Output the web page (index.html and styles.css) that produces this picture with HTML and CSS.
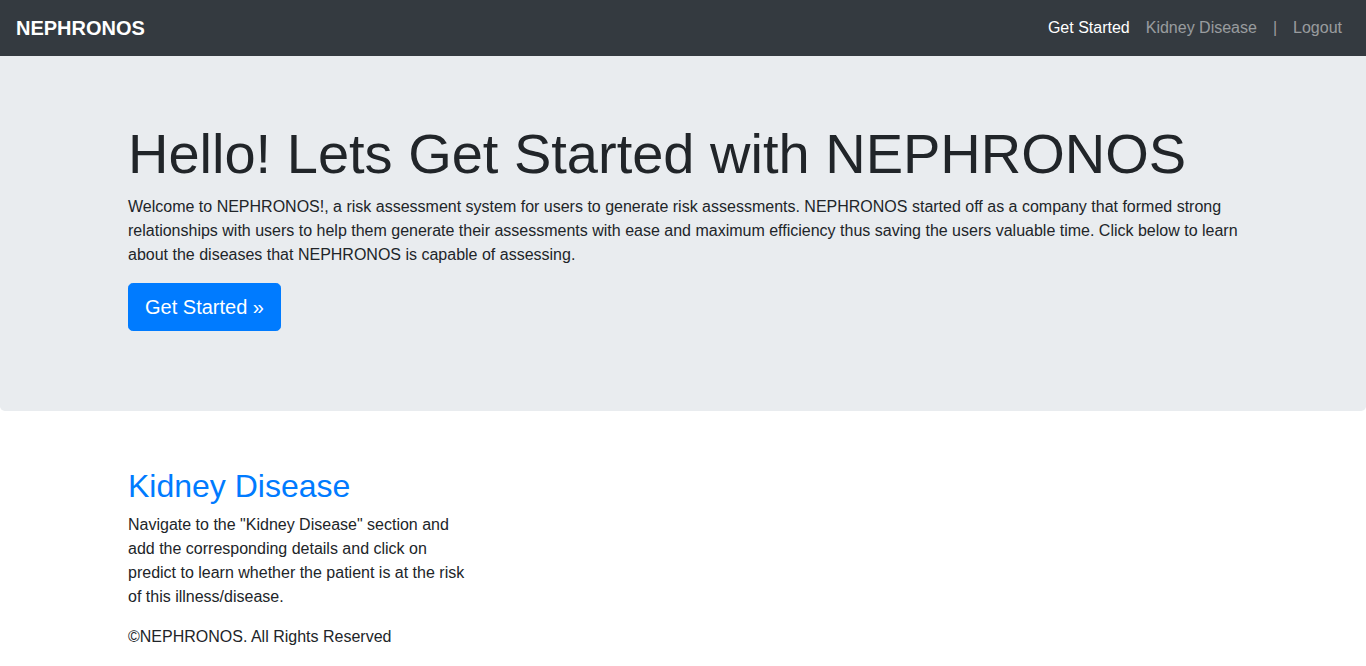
FILE: index.html
```html
<!DOCTYPE html>
<html lang="en">
<head>
<meta charset="utf-8">
<title>NEPHRONOS</title>
<link rel="stylesheet" href="styles.css">
</head>
<body>
<nav class="navbar">
  <a class="brand" href="#">NEPHRONOS</a>
  <ul class="nav">
    <li><a class="nav-link active" href="#">Get Started</a></li>
    <li><a class="nav-link" href="#">Kidney Disease</a></li>
    <li><span class="nav-link">|</span></li>
    <li><a class="nav-link" href="#">Logout</a></li>
  </ul>
</nav>
<main>
  <div class="jumbotron">
    <div class="container">
      <h1 class="display">Hello! Lets Get Started with NEPHRONOS</h1>
      <p>Welcome to NEPHRONOS!, a risk assessment system for users to generate risk assessments. NEPHRONOS started off as a company that formed strong relationships with users to help them generate their assessments with ease and maximum efficiency thus saving the users valuable time. Click below to learn about the diseases that NEPHRONOS is capable of assessing.</p>
      <p><a class="btn" href="#">Get Started &raquo;</a></p>
    </div>
  </div>
  <div class="container features">
    <div class="row">
      <div class="col">
        <h2><a href="#">Kidney Disease</a></h2>
        <p>Navigate to the "Kidney Disease" section and add the corresponding details and click on predict to learn whether the patient is at the risk of this illness/disease.</p>
      </div>
    </div>
  </div>
</main>
<footer class="container">
  <p>&copy;NEPHRONOS. All Rights Reserved</p>
</footer>
</body>
</html>
```
FILE: styles.css
```css
* { box-sizing: border-box; }
html, body { margin: 0; padding: 0; }
body {
  font-family: "Liberation Sans", Arial, sans-serif;
  font-size: 16px;
  line-height: 1.5;
  color: #212529;
  background: #fff;
}
a { text-decoration: none; }
p { margin: 0 0 16px 0; }

.navbar {
  background: #343a40;
  height: 56px;
  padding: 8px 16px;
  display: flex;
  align-items: center;
  justify-content: space-between;
}
.brand {
  color: #fff;
  font-weight: 700;
  font-size: 20px;
  line-height: 30px;
  padding: 5px 0;
}
.nav {
  list-style: none;
  margin: 0;
  padding: 0;
  display: flex;
}
.nav-link {
  display: block;
  padding: 8px;
  color: rgba(255,255,255,.5);
  line-height: 24px;
}
.nav-link.active { color: #fff; }

.container {
  width: 1140px;
  margin: 0 auto;
  padding: 0 15px;
}
.jumbotron {
  background: #e9ecef;
  padding: 64px 0;
  margin-bottom: 32px;
  border-radius: 0 0 4.8px 4.8px;
}
.display {
  font-size: 56px;
  font-weight: 400;
  line-height: 1.2;
  margin: 0 0 8px 0;
}
.btn {
  display: inline-block;
  background: #007bff;
  color: #fff;
  border: 1px solid #007bff;
  font-size: 20px;
  line-height: 30px;
  padding: 8px 16px;
  border-radius: 4.8px;
}
.features { padding-top: 24px; }
.row { display: flex; margin: 0 -15px; }
.col { width: 380px; padding: 0 15px; }
h2 {
  font-size: 32px;
  font-weight: 400;
  line-height: 1.2;
  margin: 0 0 7px 0;
}
h2 a { color: #007bff; }
```
